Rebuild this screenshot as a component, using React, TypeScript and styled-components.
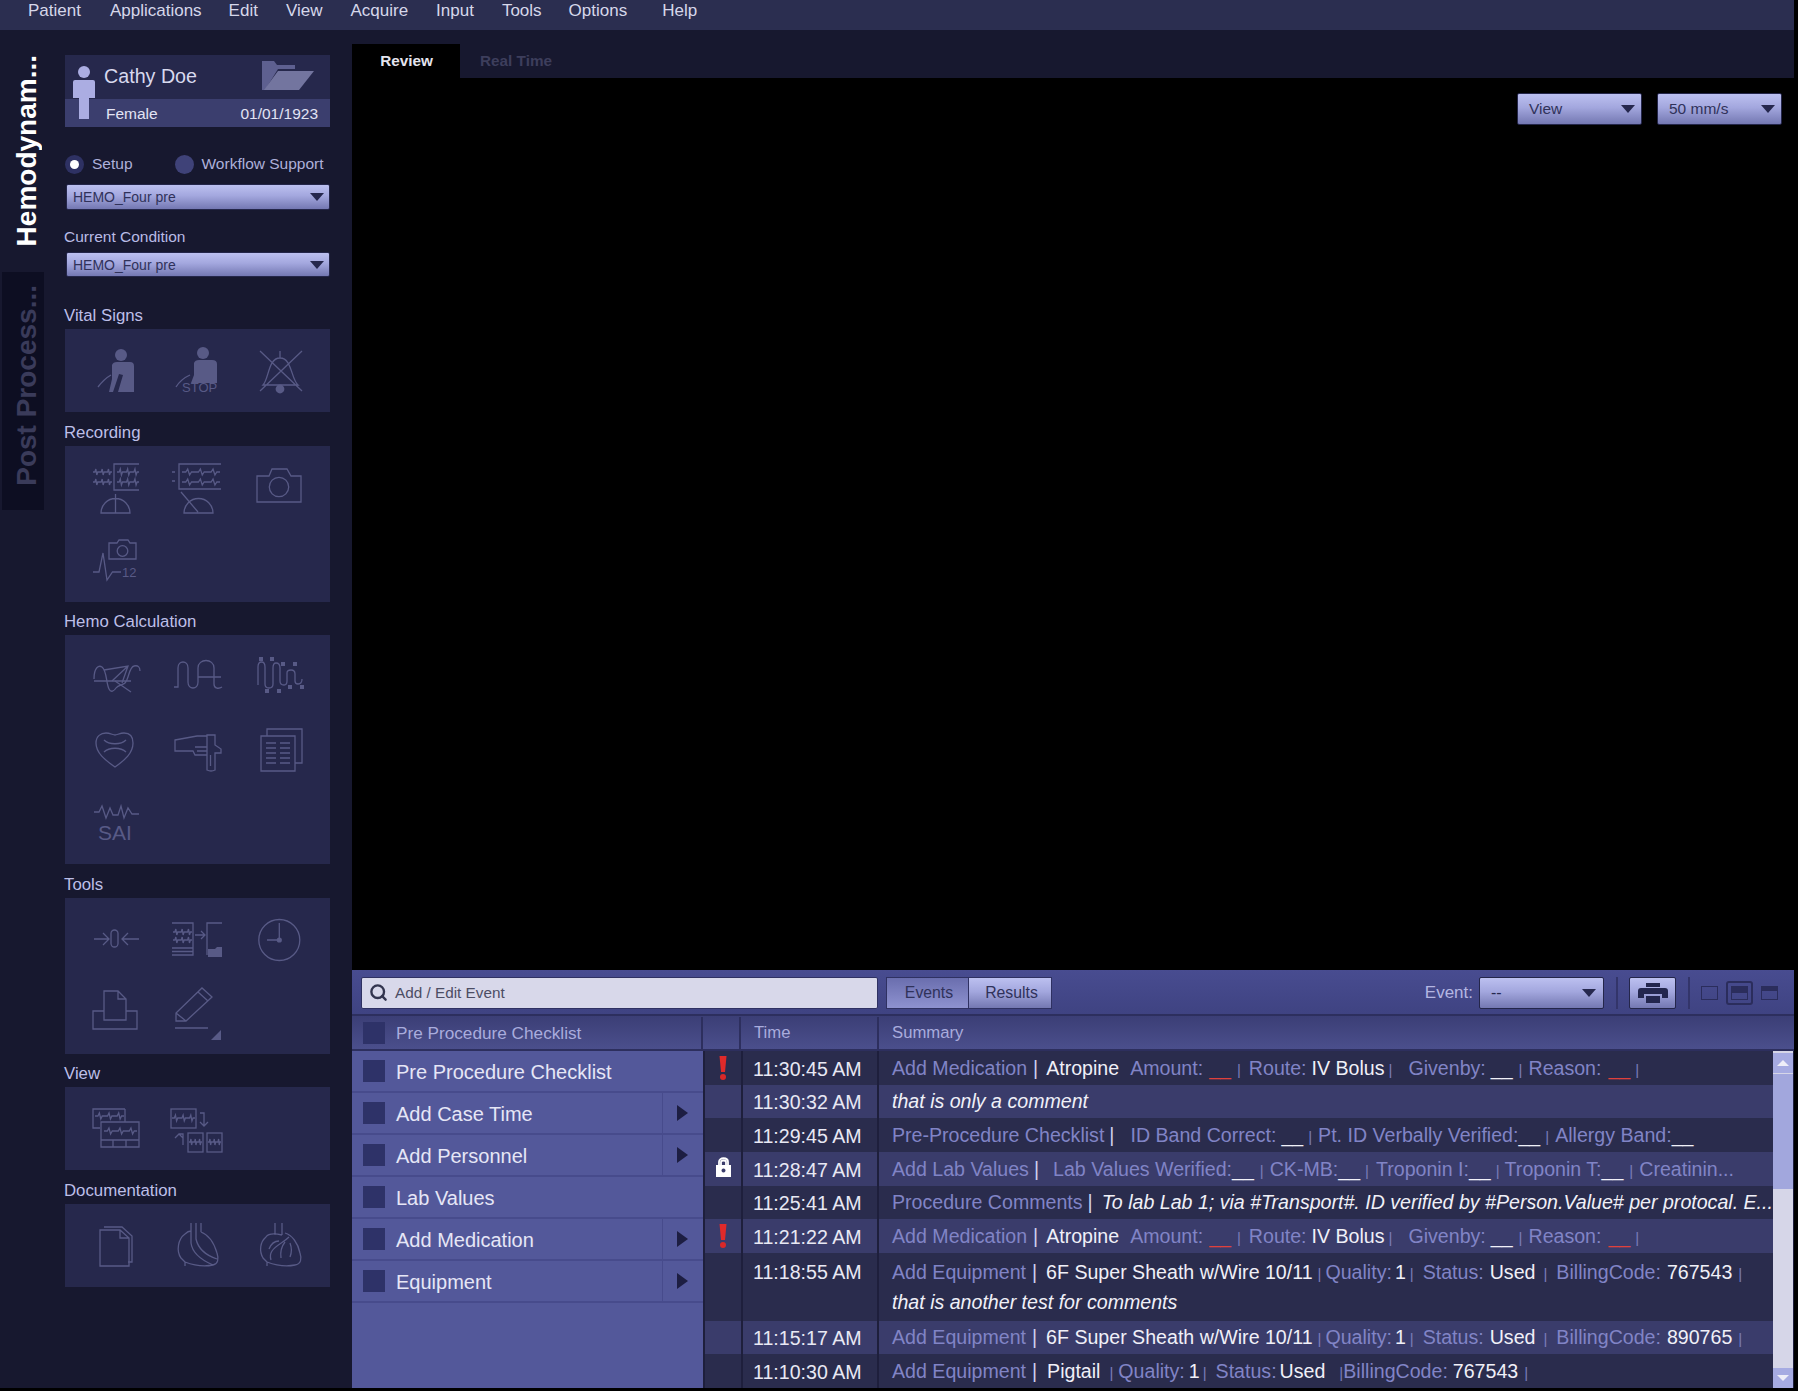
import React from 'react';
import styled, { createGlobalStyle } from 'styled-components';
import { Search } from 'lucide-react';

const GlobalStyle = createGlobalStyle`
  html, body {
    margin: 0;
    background: #000;
    font-family: "Liberation Sans", Arial, sans-serif;
  }
  * { box-sizing: border-box; }
`;

type Seg = { k: 'l' | 'v' | 'p' | 'P' | 'r' | 'b' | 'i'; t?: string; m?: number };
type Row = { time: string; mark?: 'alert' | 'lock'; segs: Seg[]; note?: string; tall?: boolean };

const medication: Seg[] = [
  { k: 'l', t: 'Add Medication' },
  { k: 'P', m: 6 },
  { k: 'v', t: 'Atropine', m: 8 },
  { k: 'l', t: 'Amount:', m: 11 },
  { k: 'r', m: 6 },
  { k: 'p', m: 6 },
  { k: 'l', t: 'Route:', m: 8 },
  { k: 'v', t: 'IV Bolus', m: 5 },
  { k: 'p', m: 4 },
  { k: 'l', t: 'Givenby:', m: 16 },
  { k: 'b', m: 5 },
  { k: 'p', m: 6 },
  { k: 'l', t: 'Reason:', m: 6 },
  { k: 'r', m: 7 },
  { k: 'p', m: 5 },
];

const equipment = (code: string): Seg[] => [
  { k: 'l', t: 'Add Equipment' },
  { k: 'P', m: 6 },
  { k: 'v', t: '6F Super Sheath w/Wire 10/11', m: 9 },
  { k: 'p', m: 5 },
  { k: 'l', t: 'Quality:', m: 4 },
  { k: 'v', t: '1', m: 3 },
  { k: 'p', m: 4 },
  { k: 'l', t: 'Status:', m: 9 },
  { k: 'v', t: 'Used', m: 6 },
  { k: 'p', m: 8 },
  { k: 'l', t: 'BillingCode:', m: 9 },
  { k: 'v', t: code, m: 6 },
  { k: 'p', m: 6 },
];

const rows: Row[] = [
  { time: '11:30:45 AM', mark: 'alert', segs: medication },
  { time: '11:30:32 AM', segs: [{ k: 'i', t: 'that is only a comment' }] },
  {
    time: '11:29:45 AM',
    segs: [
      { k: 'l', t: 'Pre-Procedure Checklist' },
      { k: 'P', m: 5 },
      { k: 'l', t: 'ID Band Correct:', m: 16 },
      { k: 'b', m: 5 },
      { k: 'p', m: 5 },
      { k: 'l', t: 'Pt. ID Verbally Verified:', m: 6 },
      { k: 'b' },
      { k: 'p', m: 5 },
      { k: 'l', t: 'Allergy Band:', m: 6 },
      { k: 'b' },
    ],
  },
  {
    time: '11:28:47 AM',
    mark: 'lock',
    segs: [
      { k: 'l', t: 'Add Lab Values' },
      { k: 'P', m: 5 },
      { k: 'l', t: 'Lab Values Werified:', m: 14 },
      { k: 'b' },
      { k: 'p', m: 6 },
      { k: 'l', t: 'CK-MB:', m: 6 },
      { k: 'b' },
      { k: 'p', m: 5 },
      { k: 'l', t: 'Troponin I:', m: 7 },
      { k: 'b' },
      { k: 'p', m: 5 },
      { k: 'l', t: 'Troponin T:', m: 5 },
      { k: 'b' },
      { k: 'p', m: 6 },
      { k: 'l', t: 'Creatinin...', m: 6 },
    ],
  },
  {
    time: '11:25:41 AM',
    segs: [
      { k: 'l', t: 'Procedure Comments' },
      { k: 'P', m: 5 },
      { k: 'i', t: 'To lab Lab 1; via #Transport#. ID verified by #Person.Value# per protocal. E...', m: 9 },
    ],
  },
  { time: '11:21:22 AM', mark: 'alert', segs: medication },
  { time: '11:18:55 AM', segs: equipment('767543'), note: 'that is another test for comments', tall: true },
  { time: '11:15:17 AM', segs: equipment('890765') },
  {
    time: '11:10:30 AM',
    segs: [
      { k: 'l', t: 'Add Equipment' },
      { k: 'P', m: 6 },
      { k: 'v', t: 'Pigtail', m: 10 },
      { k: 'p', m: 9 },
      { k: 'l', t: 'Quality:', m: 5 },
      { k: 'v', t: '1', m: 4 },
      { k: 'p', m: 3 },
      { k: 'l', t: 'Status:', m: 9 },
      { k: 'v', t: 'Used', m: 3 },
      { k: 'p', m: 14 },
      { k: 'l', t: 'BillingCode:' },
      { k: 'v', t: '767543', m: 5 },
      { k: 'p', m: 6 },
    ],
  },
];

const checklist = [
  { label: 'Pre Procedure Checklist' },
  { label: 'Add Case Time', more: true },
  { label: 'Add Personnel', more: true },
  { label: 'Lab Values' },
  { label: 'Add Medication', more: true },
  { label: 'Equipment', more: true },
];

const menus = [
  { name: 'Patient', gap: 0 },
  { name: 'Applications', gap: 29 },
  { name: 'Edit', gap: 27 },
  { name: 'View', gap: 28 },
  { name: 'Acquire', gap: 28 },
  { name: 'Input', gap: 28 },
  { name: 'Tools', gap: 28 },
  { name: 'Options', gap: 27 },
  { name: 'Help', gap: 35 },
];

const Wave = ({ x, y, w }: { x: number; y: number; w: number }) => {
  const step = w / 3;
  let d = `M${x} ${y}`;
  for (let i = 0; i < 3; i++) {
    const sx = x + step * i;
    d += ` L${sx + step * 0.3} ${y} L${sx + step * 0.45} ${y - 3} L${sx + step * 0.6} ${y + 3} L${sx + step * 0.75} ${y} L${sx + step} ${y}`;
  }
  return <path d={d} />;
};

const vitalIcons = [
  <>
    <circle className="solid" cx="36" cy="14" r="6" />
    <path className="solid" d="M27 24 Q28 21 32 21 H45 Q49 21 49 25 V51 H33 L38 34 L34 33 L28 51 H24 L27 38Z" />
    <path d="M13 46 Q19 38 26 34" />
  </>,
  <>
    <circle className="solid" cx="36" cy="12" r="6" />
    <path className="solid" d="M27 22 Q28 19 32 19 H45 Q50 19 50 23 V42 H24 L27 34Z" />
    <path d="M9 46 Q14 38 23 34" />
    <text className="label" x="15" y="51" fontSize="13">STOP</text>
  </>,
  <>
    <path d="M14 44 C20 38 19 17 31 17 C43 17 42 38 49 44 Z M31 10 V17 M11 10 L53 50 M53 10 L11 50" />
    <circle className="solid" cx="31" cy="48" r="4.4" />
  </>,
];

const recordingIcons = [
  <>
    <path d="M54 7 H29 V33 H54 M16 56 A14.5 14.5 0 0 1 45 56 Z M30.5 37 V56" />
    <Wave x={8} y={15} w={19} />
    <Wave x={8} y={25} w={19} />
    <Wave x={32} y={15} w={22} />
    <Wave x={32} y={25} w={22} />
  </>,
  <>
    <path d="M54 7 H12 V32 H54 M17 56 A14 14 0 0 1 46 56 Z M14 35 L31 55 M5 15 H8 M5 24 H8" />
    <Wave x={15} y={15} w={38} />
    <Wave x={15} y={25} w={38} />
  </>,
  <>
    <path d="M8 19 H20 L23 12 H38 L42 19 H52 V45 H8 Z" />
    <circle cx="30" cy="30" r="9.7" />
  </>,
  <>
    <path d="M24 13 H32 L34 10 H43 L45 13 H51 V29 H24 Z M8 42 H14 L18 23 L22 50 L27.5 42 H36" />
    <circle cx="37.5" cy="21" r="5.3" />
    <text className="label" x="37" y="47" fontSize="13">12</text>
  </>,
];

const hemoIcons = [
  <>
    <path d="M9 34 H46 M9 32 C9 20 14 18 17 20 C22 24 21 36 24 42 C26 46 29 44 31 41 C33 38 38 38 40 36 C44 32 44 20 49 19 C53 18 55 20 55 24" />
    <path d="M19 23 L43 19 L37 36 M30 34 L46 45 M27 34 L43 19" />
  </>,
  <path d="M7 40 H11 V21 C11 13 21 13 21 21 V35 C21 43 31 43 31 35 V21 C31 11 47 11 47 21 V37 C47 42 52 42 55 40 M31 30 H54" />,
  <>
    <path d="M9 38 V20 Q9 15 12.5 15 Q16 15 16 20 V37 Q16 41 20 41 Q24 41 24 37 V21 Q24 16 27 16 Q31 16 31 21 V34 Q31 38 35 38 Q38 38 38 34 V26 Q38 23 42 23 Q46 23 46 27 V34 Q46 37 49 37 Q53 37 53 32" />
    <rect className="solid" x="10" y="10" width="4" height="4" />
    <rect className="solid" x="21" y="10" width="4" height="4" />
    <rect className="solid" x="32" y="15" width="4" height="4" />
    <rect className="solid" x="44" y="15" width="4" height="4" />
    <rect className="solid" x="16" y="42" width="4" height="4" />
    <rect className="solid" x="28" y="42" width="4" height="4" />
    <rect className="solid" x="39" y="38" width="4" height="4" />
    <rect className="solid" x="51" y="38" width="4" height="4" />
  </>,
  <>
    <path d="M30 47 C20 40 11 33 11 23 C11 16 16 13 21 13 C25 13 28 15 30 15 C32 15 35 13 39 13 C44 13 48 16 48 23 C48 33 40 40 30 47Z" />
    <path d="M19 20 C24 25 36 25 41 20 M19 32 C24 27 36 27 41 32" />
  </>,
  <path d="M8 20 L30 16 H40 V15 H48 V25 L54 29 V33 H48 V50 Q44 52 40 50 V35 L28 35 L26 31 H8 Z M40 15 V35 M43.5 35 V46 M30 31 H40 M28 27 H40" />,
  <>
    <path d="M18 16 V9 H53 V43 H46 M12 16 H46 V51 H12 Z" />
    <path d="M17 23 H27 M31 23 H41 M17 28 H27 M31 28 H41 M17 33 H27 M31 33 H41 M17 38 H27 M31 38 H41 M17 43 H27 M31 43 H41" />
  </>,
  <>
    <path d="M9 19 H14 L17 13 L21 25 L25 15 L28 22 H33 L36 13 L39 25 L43 15 L47 21 H54" />
    <text className="label" x="13" y="47" fontSize="21">SAI</text>
  </>,
];

const toolIcons = [
  <>
    <path d="M9 30 H24 M18 24 L24 30 L18 36 M54 30 H37 M43 24 L37 30 L43 36" />
    <rect x="26" y="21" width="7" height="17" rx="3.5" />
  </>,
  <>
    <path d="M5 14 H26 V46 H5 M5 39 H26 M5 42.5 H26 M28 26 H38 M34 22 L38 26 L34 30 M55 14 H40 V46" />
    <Wave x={6} y={23} w={19} />
    <Wave x={6} y={31} w={19} />
    <path className="solid" d="M41 40 H48 L50 38 H55 V48 H41 Z" />
  </>,
  <>
    <circle cx="30.3" cy="31" r="20.5" />
    <path d="M30.3 31 V14 M30.3 31 H18" />
    <circle className="solid" cx="30.3" cy="31" r="2.6" />
  </>,
  <path d="M19 29 H8 V47 H52 V29 H41 M19 38 V9 H33 L41 17 V38 Z M33 9 V17 H41" />,
  <>
    <path d="M9 39 V31 L35 6 L45 15 L19 39 Z M9 31 L19 39 M31 10 L41 19 M8 46 H41" />
    <path className="solid" d="M54 48 V58 H44 Z" />
  </>,
];

const viewIcons = [
  <>
    <path d="M40 10 H8 V29 H15 M40 10 V23 M16 23 H54 V48 H16 Z M16 41 H54 M28 41 V48 M41 41 V48" />
    <Wave x={10} y={17} w={29} />
    <Wave x={19} y={32} w={33} />
  </>,
  <>
    <rect x="4" y="10" width="25" height="19" />
    <rect x="21" y="34" width="15" height="19" />
    <rect x="40" y="34" width="15" height="19" />
    <Wave x={5} y={19} w={23} />
    <Wave x={22} y={43} w={13} />
    <Wave x={41} y={43} w={13} />
    <path d="M33 14 H37 V27 M33 23 L37 27 L41 23 M16 46 V35 H12 M8 39 L12 35 L16 39" />
  </>,
];

const docIcons = [
  <path d="M19 12 H37 L47 21 V47 H43 M15 15 H35 L44 23 V51 H15 Z M35 15 V23 H44" />,
  <path d="M18 19 C11 24 9 36 14 43 L18 47 V51 M18 47 C26 50 36 52 46 50 C51 49 52 44 50 38 C47 28 42 20 34 17 M24 8 V28 C25 36 32 44 46 50 M29 8 V24 C31 33 38 40 50 44 M34 17 V8 M18 19 C20 17 22 16 24 16" />,
  <path d="M17 22 C11 27 10 36 14 43 L18 47 V51 M18 47 C26 50 36 52 46 50 C52 49 53 44 51 38 C49 28 43 20 36 18 M26 8 V20 M33 8 V20 M17 22 C19 19 24 18 33 20 M40 22 C34 28 27 30 23 36 C21 39 21 42 22 45 M36 27 C32 32 31 36 32 43 M41 28 C43 33 43 37 41 42 M30 26 C25 26 22 29 20 34" />,
];

const sections = [
  { title: 'Vital Signs', icons: vitalIcons },
  { title: 'Recording', icons: recordingIcons },
  { title: 'Hemo Calculation', icons: hemoIcons },
  { title: 'Tools', icons: toolIcons },
  { title: 'View', icons: viewIcons },
  { title: 'Documentation', icons: docIcons },
];

const App: React.FC = () => {
  return (
    <>
      <GlobalStyle />
      <Frame>
        <MenuBar>
          {menus.map((menu) => (
            <MenuItem key={menu.name} $gap={menu.gap}>{menu.name}</MenuItem>
          ))}
        </MenuBar>
        <Body>
          <Rail>
            <RailTab $active>
              <RailLabel $active>Hemodynam...</RailLabel>
            </RailTab>
            <RailTab>
              <RailLabel>Post Process...</RailLabel>
            </RailTab>
          </Rail>

          <Sidebar>
            <PatientCard>
              <PatientFigure viewBox="0 0 22 53">
                <circle cx="11" cy="6" r="6" />
                <path d="M2 14 H20 Q22 14 22 16 V32 H16 V53 H6 V32 H0 V16 Q0 14 2 14 Z" />
              </PatientFigure>
              <PatientTop>
                <PatientName>Cathy Doe</PatientName>
                <Folder viewBox="0 0 52 30">
                  <path d="M0 0 H12 L15 4 H33 V8 H16 L3 29 H0 Z" fill="#5e6090" />
                  <path d="M16 10 H52 L37 29 H2 Z" fill="#73759f" />
                </Folder>
              </PatientTop>
              <PatientBottom>
                <span>Female</span>
                <span>01/01/1923</span>
              </PatientBottom>
            </PatientCard>

            <RadioRow>
              <Radio $on />
              <RadioLabel>Setup</RadioLabel>
              <Radio />
              <RadioLabel>Workflow Support</RadioLabel>
            </RadioRow>
            <Select $height={26}>
              HEMO_Four pre
              <Caret />
            </Select>
            <ConditionLabel>Current Condition</ConditionLabel>
            <Select $height={25}>
              HEMO_Four pre
              <Caret />
            </Select>

            <Sections>
              {sections.map((section) => (
                <React.Fragment key={section.title}>
                  <SectionLabel>{section.title}</SectionLabel>
                  <IconPanel>
                    {section.icons.map((icon, i) => (
                      <IconCell key={i}>
                        <Glyph viewBox="0 0 60 60">{icon}</Glyph>
                      </IconCell>
                    ))}
                  </IconPanel>
                </React.Fragment>
              ))}
            </Sections>
          </Sidebar>

          <Main>
            <TabRow>
              <Tab $active>Review</Tab>
              <Tab>Real Time</Tab>
            </TabRow>
            <Stage>
              <StageSelect>
                View
                <Caret />
              </StageSelect>
              <StageSelect>
                50 mm/s
                <Caret />
              </StageSelect>
            </Stage>

            <EventPanel>
              <Toolbar>
                <SearchField>
                  <Search size={19} strokeWidth={3} color="#33354f" />
                  Add / Edit Event
                </SearchField>
                <Segmented>
                  <SegmentButton $pressed>Events</SegmentButton>
                  <SegmentButton>Results</SegmentButton>
                </Segmented>
                <EventLabel>Event:</EventLabel>
                <EventSelect>
                  --
                  <Caret />
                </EventSelect>
                <ToolDivider />
                <PrintButton>
                  <svg width="30" height="20" viewBox="0 0 30 20">
                    <path d="M8 0 H22 V4 H8 Z M3 5 H27 Q30 5 30 8 V15 H24 V11 H6 V15 H0 V8 Q0 5 3 5 Z M8 13 H22 V20 H8 Z" fill="#23264e" />
                  </svg>
                </PrintButton>
                <ToolDivider />
                <LayoutIcons>
                  <LayoutIcon $fill={0} />
                  <LayoutFrame>
                    <LayoutIcon $fill={50} />
                  </LayoutFrame>
                  <LayoutIcon $fill={30} />
                </LayoutIcons>
              </Toolbar>

              <HeaderRow>
                <ListHeader>
                  <CheckBox />
                  Pre Procedure Checklist
                </ListHeader>
                <MarkHeader />
                <TimeHeader>Time</TimeHeader>
                <SummaryHeader>Summary</SummaryHeader>
              </HeaderRow>

              <Content>
                <ChecklistColumn>
                  {checklist.map((item) => (
                    <ChecklistRow key={item.label}>
                      <CheckBox />
                      <ChecklistText>{item.label}</ChecklistText>
                      {item.more && (
                        <MoreCell>
                          <MoreArrow />
                        </MoreCell>
                      )}
                    </ChecklistRow>
                  ))}
                </ChecklistColumn>

                <TableBody>
                  <Rows>
                    {rows.map((row, i) => (
                      <DataRow key={row.time} $light={i % 2 === 1} $tall={row.tall}>
                        <MarkCell>
                          {row.mark === 'alert' && (
                            <svg width="8" height="24" viewBox="0 0 8 24">
                              <path d="M0.5 0 H7.5 L6 16 H2 Z" fill="#e02a2a" />
                              <circle cx="4" cy="21" r="3" fill="#d92828" />
                            </svg>
                          )}
                          {row.mark === 'lock' && (
                            <svg width="15" height="20" viewBox="0 0 15 20">
                              <path d="M3 8 V5 C3 0 12 0 12 5 V8 M5 8 V5 C5 3 10 3 10 5 V8" fill="none" stroke="#fff" strokeWidth="1.8" />
                              <path d="M0 8 H15 V20 H0 Z M7.5 11.5 a2 2 0 1 0 0.01 0 Z" fill="#fff" fillRule="evenodd" />
                            </svg>
                          )}
                        </MarkCell>
                        <TimeCell $tall={row.tall}>{row.time}</TimeCell>
                        <SummaryCell $tall={row.tall}>
                          <SummaryLine>
                            {row.segs.map((seg, j) => (
                              <Segment key={j} $kind={seg.k} $ml={seg.m ?? 0}>
                                {seg.k === 'p' || seg.k === 'P' ? '|' : seg.k === 'r' || seg.k === 'b' ? '__' : seg.t}
                              </Segment>
                            ))}
                          </SummaryLine>
                          {row.note && <NoteLine>{row.note}</NoteLine>}
                        </SummaryCell>
                      </DataRow>
                    ))}
                  </Rows>
                  <Scrollbar>
                    <ScrollButton>
                      <ScrollArrow />
                    </ScrollButton>
                    <ScrollThumb />
                    <ScrollTrack />
                    <ScrollButton>
                      <ScrollArrow $down />
                    </ScrollButton>
                  </Scrollbar>
                </TableBody>
              </Content>
            </EventPanel>
          </Main>
        </Body>
      </Frame>
    </>
  );
};

export default App;

const Frame = styled.div`
  width: 1794px;
  height: 1388px;
  display: flex;
  flex-direction: column;
  background: #17182f;
  overflow: hidden;
`;

const MenuBar = styled.div`
  height: 30px;
  flex: none;
  display: flex;
  align-items: flex-start;
  padding-left: 28px;
  background: #2b2e50;
`;

const MenuItem = styled.div<{ $gap: number }>`
  margin-left: ${(p) => p.$gap}px;
  font-size: 17px;
  line-height: 21px;
  color: #d6d7ea;
`;

const Body = styled.div`
  flex: 1;
  display: flex;
  min-height: 0;
`;

const Rail = styled.div`
  width: 44px;
  flex: none;
  display: flex;
  flex-direction: column;
`;

const RailTab = styled.div<{ $active?: boolean }>`
  height: ${(p) => (p.$active ? 242 : 238)}px;
  margin-left: ${(p) => (p.$active ? 0 : 2)}px;
  padding-top: ${(p) => (p.$active ? 25 : 13)}px;
  padding-left: ${(p) => (p.$active ? 9 : 7)}px;
  display: flex;
  justify-content: center;
  align-items: flex-start;
  background: ${(p) => (p.$active ? '#17182f' : '#0d0e22')};
`;

const RailLabel = styled.span<{ $active?: boolean }>`
  writing-mode: vertical-rl;
  transform: rotate(180deg);
  font-size: 28px;
  font-weight: 700;
  line-height: 30px;
  white-space: nowrap;
  color: ${(p) => (p.$active ? '#ffffff' : '#3a3b5a')};
`;

const Sidebar = styled.div`
  width: 308px;
  flex: none;
  padding: 25px 22px 0 21px;
`;

const PatientCard = styled.div`
  position: relative;
  height: 72px;
  display: flex;
  flex-direction: column;
  background: #26284c;
`;

const PatientFigure = styled.svg`
  position: absolute;
  left: 8px;
  top: 11px;
  width: 22px;
  height: 53px;
  fill: #abade2;
`;

const PatientTop = styled.div`
  height: 44px;
  display: flex;
  align-items: center;
  justify-content: space-between;
  padding: 0 16px 2px 39px;
`;

const PatientName = styled.div`
  font-size: 19.7px;
  color: #d8d9ee;
`;

const Folder = styled.svg`
  width: 52px;
  height: 30px;
`;

const PatientBottom = styled.div`
  flex: 1;
  display: flex;
  align-items: center;
  justify-content: space-between;
  padding: 1px 12px 0 41px;
  background: #3b3e6e;
  font-size: 15.5px;
  color: #e2e3f4;
`;

const RadioRow = styled.div`
  height: 57px;
  padding-top: 17px;
  display: flex;
  align-items: center;
`;

const Radio = styled.div<{ $on?: boolean }>`
  width: 19px;
  height: 19px;
  flex: none;
  border-radius: 50%;
  display: flex;
  align-items: center;
  justify-content: center;
  background: ${(p) => (p.$on ? '#2e3163' : '#3f4278')};

  &::after {
    content: '';
    display: ${(p) => (p.$on ? 'block' : 'none')};
    width: 9px;
    height: 9px;
    border-radius: 50%;
    background: #fff;
  }
`;

const RadioLabel = styled.div`
  margin: 0 42px 0 8px;
  font-size: 15.5px;
  white-space: nowrap;
  color: #aeb0da;

  &:last-child {
    margin-right: 0;
  }
`;

const controlSurface = `
  background: linear-gradient(180deg, #bcc0f0 0%, #a3a7de 45%, #7478b2 100%);
  border: 1px solid #24264a;
  color: #30325a;
`;

const Caret = styled.i`
  width: 0;
  height: 0;
  margin-left: auto;
  border-left: 7px solid transparent;
  border-right: 7px solid transparent;
  border-top: 8px solid #26284e;
`;

const Select = styled.div<{ $height: number }>`
  ${controlSurface}
  height: ${(p) => p.$height}px;
  margin-left: 1px;
  display: flex;
  align-items: center;
  padding: 0 5px 0 6px;
  border-radius: 2px;
  font-size: 14px;
`;

const ConditionLabel = styled.div`
  height: 42px;
  margin-left: -1px;
  display: flex;
  align-items: center;
  padding-top: 11px;
  font-size: 15.5px;
  color: #b9bbe6;
`;

const Sections = styled.div`
  display: flex;
  flex-direction: column;
  padding-top: 18.5px;
`;

const SectionLabel = styled.div`
  height: 33.5px;
  flex: none;
  margin-left: -1px;
  display: flex;
  align-items: flex-end;
  padding-bottom: 4px;
  font-size: 16.8px;
  line-height: 18px;
  color: #bdbfe8;
`;

const IconPanel = styled.div`
  display: grid;
  grid-template-columns: repeat(3, 82px);
  grid-auto-rows: 73px;
  padding: 5px 0 5px 9px;
  background: #26284c;
`;

const IconCell = styled.div`
  display: flex;
  align-items: center;
  justify-content: center;
`;

const Glyph = styled.svg`
  width: 60px;
  height: 60px;
  fill: none;
  stroke: #585a86;
  stroke-width: 1.3;

  .solid {
    fill: #585a86;
    stroke: none;
  }
  .label {
    fill: #585a86;
    stroke: none;
    font-family: "Liberation Sans", Arial, sans-serif;
  }
`;

const Main = styled.div`
  flex: 1;
  min-width: 0;
  display: flex;
  flex-direction: column;
`;

const TabRow = styled.div`
  height: 48px;
  flex: none;
  display: flex;
  align-items: flex-end;
`;

const Tab = styled.div<{ $active?: boolean }>`
  width: 108px;
  height: 34px;
  margin-left: ${(p) => (p.$active ? 0 : 12)}px;
  display: flex;
  align-items: center;
  justify-content: ${(p) => (p.$active ? 'center' : 'flex-start')};
  padding-left: ${(p) => (p.$active ? 1 : 8)}px;
  background: ${(p) => (p.$active ? '#000' : 'transparent')};
  font-size: 15.3px;
  font-weight: 700;
  color: ${(p) => (p.$active ? '#e4e4ee' : '#3d3e5c')};
`;

const Stage = styled.div`
  flex: 1;
  display: flex;
  justify-content: flex-end;
  align-items: flex-start;
  gap: 15px;
  padding: 15px 12px 0 0;
  background: #000;
`;

const StageSelect = styled.div`
  ${controlSurface}
  width: 125px;
  height: 32px;
  display: flex;
  align-items: center;
  padding: 0 6px 0 11px;
  border-radius: 2px;
  font-size: 15.5px;
`;

const EventPanel = styled.div`
  height: 418px;
  flex: none;
  display: flex;
  flex-direction: column;
  background: #53589a;
`;

const Toolbar = styled.div`
  height: 46px;
  flex: none;
  display: flex;
  align-items: center;
  padding: 1px 0 0 9px;
  background: linear-gradient(180deg, #484c90 0%, #3f4382 100%);
  border-bottom: 2px solid #2d2f5e;
`;

const SearchField = styled.div`
  width: 517px;
  height: 32px;
  flex: none;
  display: flex;
  align-items: center;
  gap: 7px;
  padding-left: 7px;
  background: #d8d8ea;
  border-radius: 2px;
  border: 1px solid #2f3162;
  font-size: 15.3px;
  color: #4c4d64;
`;

const Segmented = styled.div`
  margin-left: 8px;
  display: flex;
`;

const SegmentButton = styled.div<{ $pressed?: boolean }>`
  width: 83px;
  height: 32px;
  display: flex;
  align-items: center;
  justify-content: center;
  padding-left: 3px;
  background: ${(p) =>
    p.$pressed
      ? 'linear-gradient(180deg, #6a6eae 0%, #8e92d0 100%)'
      : 'linear-gradient(180deg, #bcc0f0 0%, #a3a7de 45%, #7478b2 100%)'};
  border: 1px solid #2f3162;
  border-left-width: ${(p) => (p.$pressed ? 1 : 0)}px;
  font-size: 15.8px;
  color: #30325a;
`;

const EventLabel = styled.div`
  margin-left: auto;
  margin-right: 6px;
  font-size: 17px;
  color: #b4b6e2;
`;

const EventSelect = styled.div`
  ${controlSurface}
  width: 125px;
  height: 32px;
  flex: none;
  display: flex;
  align-items: center;
  padding: 0 7px 0 11px;
  border-radius: 2px;
  font-size: 16px;
  color: #26284e;
`;

const ToolDivider = styled.div`
  width: 2px;
  height: 32px;
  margin: 0 11px 0 12px;
  background: #33356a;
`;

const PrintButton = styled.div`
  ${controlSurface}
  width: 47px;
  height: 32px;
  display: flex;
  align-items: center;
  justify-content: center;
  border-radius: 2px;
`;

const LayoutIcons = styled.div`
  display: flex;
  align-items: center;
  gap: 8px;
  margin-right: 16px;
`;

const LayoutFrame = styled.div`
  width: 27px;
  height: 24px;
  display: flex;
  align-items: center;
  justify-content: center;
  border: 2px solid #2b2d5c;
  border-radius: 3px;
`;

const LayoutIcon = styled.div<{ $fill: number }>`
  width: 17px;
  height: 14px;
  border: 1.5px solid #2b2d5c;
  background: linear-gradient(180deg, #2b2d5c ${(p) => p.$fill}%, transparent ${(p) => p.$fill}%);
`;

const HeaderRow = styled.div`
  height: 35px;
  flex: none;
  display: flex;
  align-items: center;
  padding-top: 1px;
  background: linear-gradient(180deg, #3b3e76 0%, #4b4f8c 100%);
  border-bottom: 2px solid #2d2f5e;
  font-size: 16.7px;
  color: #a9acdd;
`;

const ListHeader = styled.div`
  width: 351px;
  height: 100%;
  flex: none;
  display: flex;
  align-items: center;
  padding-left: 11px;
  gap: 11px;
  font-size: 17.2px;
  border-right: 2px solid #2d2f5e;
`;

const MarkHeader = styled.div`
  width: 38px;
  height: 100%;
  flex: none;
  border-right: 2px solid #2d2f5e;
`;

const TimeHeader = styled.div`
  width: 138px;
  height: 100%;
  flex: none;
  display: flex;
  align-items: center;
  padding-left: 13px;
  border-right: 2px solid #2d2f5e;
`;

const SummaryHeader = styled.div`
  padding-left: 13px;
`;

const Content = styled.div`
  flex: 1;
  min-height: 0;
  display: flex;
`;

const ChecklistColumn = styled.div`
  width: 351px;
  flex: none;
  background: #53589a;
`;

const ChecklistRow = styled.div`
  height: 42px;
  display: flex;
  align-items: center;
  padding-left: 11px;
  border-bottom: 2px solid #474b8c;
`;

const CheckBox = styled.div`
  width: 22px;
  height: 22px;
  flex: none;
  background: #2e3268;
`;

const ChecklistText = styled.div`
  margin-left: 11px;
  padding-top: 2px;
  font-size: 20px;
  color: #e6e6f6;
`;

const MoreCell = styled.div`
  width: 41px;
  height: 100%;
  margin-left: auto;
  display: flex;
  align-items: center;
  justify-content: center;
  border-left: 1px solid #474b8c;
`;

const MoreArrow = styled.i`
  width: 0;
  height: 0;
  margin-right: 2px;
  border-top: 8px solid transparent;
  border-bottom: 8px solid transparent;
  border-left: 11px solid #1d1e42;
`;

const TableBody = styled.div`
  flex: 1;
  min-width: 0;
  display: flex;
  background: #1e1f3c;
`;

const Rows = styled.div`
  flex: 1;
  min-width: 0;
  padding-left: 2px;
`;

const DataRow = styled.div<{ $light: boolean; $tall?: boolean }>`
  height: ${(p) => (p.$tall ? 67.4 : 33.7)}px;
  display: flex;
  background: ${(p) => (p.$light ? '#3a3c6b' : '#2a2c4d')};
`;

const MarkCell = styled.div`
  width: 38px;
  flex: none;
  padding-top: 5px;
  display: flex;
  justify-content: center;
  align-items: flex-start;
  border-right: 2px solid #1e1f3c;
`;

const TimeCell = styled.div<{ $tall?: boolean }>`
  width: 136px;
  flex: none;
  padding: ${(p) => (p.$tall ? 7 : 5.5)}px 0 0 10px;
  line-height: 24px;
  font-size: 19.6px;
  color: #e8e8f4;
  border-right: 2px solid #1e1f3c;
`;

const SummaryCell = styled.div<{ $tall?: boolean }>`
  flex: 1;
  min-width: 0;
  padding: ${(p) => (p.$tall ? 7 : 4.5)}px 0 0 13px;
  overflow: hidden;
  font-size: 19.6px;
  line-height: 24px;
`;

const SummaryLine = styled.div`
  display: flex;
  align-items: baseline;
  white-space: pre;
`;

const segmentColor = { l: '#8184c6', v: '#f0f0f8', p: '#7a7db8', P: '#d0d1ee', r: '#e0413c', b: '#f0f0f8', i: '#f0f0f8' };

const Segment = styled.span<{ $kind: keyof typeof segmentColor; $ml: number }>`
  margin-left: ${(p) => p.$ml}px;
  color: ${(p) => segmentColor[p.$kind]};
  font-size: ${(p) => (p.$kind === 'p' ? 15 : 19.6)}px;
  font-style: ${(p) => (p.$kind === 'i' ? 'italic' : 'normal')};
`;

const NoteLine = styled.div`
  margin-top: 4px;
  font-style: italic;
  color: #f0f0f8;
`;

const Scrollbar = styled.div`
  width: 20px;
  flex: none;
  margin-right: 1px;
  padding-top: 2px;
  display: flex;
  flex-direction: column;
  background: #d6d6e8;
`;

const ScrollButton = styled.div`
  height: 20px;
  flex: none;
  display: flex;
  align-items: center;
  justify-content: center;
  background: #a6abe2;
`;

const ScrollArrow = styled.i<{ $down?: boolean }>`
  width: 0;
  height: 0;
  border-left: 6px solid transparent;
  border-right: 6px solid transparent;
  border-bottom: ${(p) => (p.$down ? 0 : 6)}px solid #eeeef8;
  border-top: ${(p) => (p.$down ? 6 : 0)}px solid #eeeef8;
`;

const ScrollThumb = styled.div`
  height: 115px;
  flex: none;
  margin-top: 1px;
  background: #a2a7dd;
`;

const ScrollTrack = styled.div`
  flex: 1;
`;
